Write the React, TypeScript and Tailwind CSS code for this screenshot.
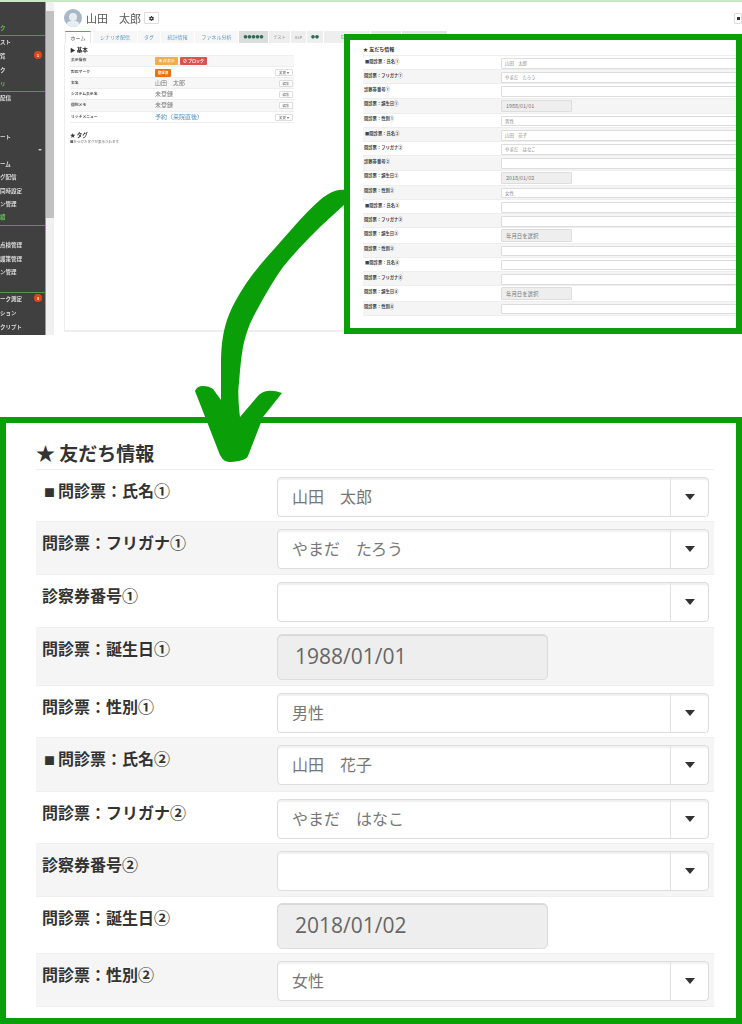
import { FaCog } from "react-icons/fa";

const G = "#0a9f09";

const bigRows = [
  { label: "問診票：氏名①", mark: true, value: "山田　太郎", cls: "h-[52px]", bg: "bg-white" },
  { label: "問診票：フリガナ①", value: "やまだ　たろう", cls: "h-[53px]", bg: "bg-[#f5f5f5]" },
  { label: "診察券番号①", value: "", cls: "h-[53px]", bg: "bg-white" },
  { label: "問診票：誕生日①", date: true, value: "1988/01/01", cls: "h-[58px]", bg: "bg-[#f5f5f5]" },
  { label: "問診票：性別①", value: "男性", cls: "h-[52px]", bg: "bg-white" },
  { label: "問診票：氏名②", mark: true, value: "山田　花子", cls: "h-[54px]", bg: "bg-[#f5f5f5]" },
  { label: "問診票：フリガナ②", value: "やまだ　はなこ", cls: "h-[52px]", bg: "bg-white" },
  { label: "診察券番号②", value: "", cls: "h-[53px]", bg: "bg-[#f5f5f5]" },
  { label: "問診票：誕生日②", date: true, value: "2018/01/02", cls: "h-[57px]", bg: "bg-white" },
  { label: "問診票：性別②", value: "女性", cls: "h-[53px]", bg: "bg-[#f5f5f5]" },
];

const smallRows = [
  ...bigRows.map((r) => ({ label: r.label, mark: r.mark, date: r.date, value: r.value })),
  { label: "問診票：氏名③", mark: true, value: "" },
  { label: "問診票：フリガナ③", value: "" },
  { label: "問診票：誕生日③", date: true, value: "年月日を選択" },
  { label: "問診票：性別③", value: "" },
  { label: "問診票：氏名④", mark: true, value: "" },
  { label: "問診票：フリガナ④", value: "" },
  { label: "問診票：誕生日④", date: true, value: "年月日を選択" },
  { label: "問診票：性別④", value: "" },
];

function BigRow({ r }: { r: (typeof bigRows)[number] }) {
  return (
    <div className={`flex items-start border-b border-[#efefef] ${r.cls} ${r.bg}`}>
      <div className={`w-[241px] shrink-0 pt-[8px] text-[16px] leading-[24px] font-bold text-[#333] ${r.mark ? "pl-[8px]" : "pl-[6px]"}`}>
        {r.mark && <span className="mr-[3px] text-[11px]">■</span>}
        {r.label}
      </div>
      {r.date ? (
        <div className="mt-[6px] flex h-[46px] w-[271px] items-center rounded-[5px] border border-[#dcdcdc] bg-[#eeeeee] pl-[17px] font-['Open_Sans'] text-[21px] text-[#666] shadow-[inset_0_1px_1px_rgba(0,0,0,0.1)]">
          {r.value}
        </div>
      ) : (
        <div className="mt-[7px] flex h-[40px] w-[432px] rounded-[4px] border border-[#dddddd] bg-white shadow-[inset_0_2px_1px_rgba(0,0,0,0.06)]">
          <div className="flex-1 pl-[14px] text-[16px] leading-[36px] text-[#777]">{r.value}</div>
          <div className="flex w-[38px] items-center justify-center border-l border-[#e2e2e2]">
            <div className="h-0 w-0 border-x-[5px] border-t-[6px] border-x-transparent border-t-[#333]" />
          </div>
        </div>
      )}
    </div>
  );
}

function SmallRow({ r, i }: { r: (typeof smallRows)[number]; i: number }) {
  return (
    <div className={`flex items-start border-t border-[#eeeeee] ${r.date ? "h-[15.3px]" : "h-[14.2px]"} ${i % 2 ? "bg-[#f5f5f5]" : "bg-white"}`}>
      <div className={`w-[138px] shrink-0 pt-[1.5px] text-[4.3px] leading-[7px] font-bold text-[#444] ${r.mark ? "pl-[2px]" : "pl-[1px]"}`}>
        {r.mark && <span>■</span>}
        {r.label}
      </div>
      {r.date ? (
        <div className="mt-[1px] flex h-[12.5px] w-[71px] items-center rounded-[1px] border border-[#dddddd] bg-[#eeeeee] pl-[4px] text-[5.4px] text-[#777]">
          {r.value}
        </div>
      ) : (
        <div className="mt-[2px] flex h-[10.5px] flex-1 items-center rounded-[1px] border border-[#dddddd] bg-white pl-[3px] text-[4.4px] text-[#888]">
          {r.value}
        </div>
      )}
    </div>
  );
}

const sideRows: { t: string; green?: boolean; line?: boolean; badge?: string; chev?: boolean; cls: string }[] = [
  { t: "ク", green: true, line: true, cls: "h-[14px]" },
  { t: "スト", cls: "h-[14px]" },
  { t: "覧", badge: "1", cls: "h-[14px]" },
  { t: "ク", cls: "h-[14px]" },
  { t: "リ", green: true, line: true, cls: "h-[14px]" },
  { t: "配信", cls: "h-[13.33px]" },
  { t: "", cls: "h-[13.33px]" },
  { t: "", cls: "h-[13.33px]" },
  { t: "ート", cls: "h-[13.33px]" },
  { t: "", chev: true, cls: "h-[13.33px]" },
  { t: "ーム", cls: "h-[13.33px]" },
  { t: "グ配信", cls: "h-[13.33px]" },
  { t: "同時設定", cls: "h-[13.33px]" },
  { t: "ン管理", cls: "h-[13.33px]" },
  { t: "績", green: true, line: true, cls: "h-[14.5px]" },
  { t: "", cls: "h-[13.5px]" },
  { t: "点検管理", cls: "h-[13.5px]" },
  { t: "護策管理", cls: "h-[13.5px]" },
  { t: "ン管理", line: true, cls: "h-[27px]" },
  { t: "ーク測定", badge: "3", cls: "h-[14px]" },
  { t: "ション", cls: "h-[13.5px]" },
  { t: "クリプト", cls: "h-[13.5px]" },
];

function Sidebar() {
  return (
    <div className="mt-[2px] h-[333px] w-[46px] shrink-0 overflow-hidden border-r border-[#999] bg-[#404040] pt-[19.5px] blur-[0.3px]">
      {sideRows.map((s, i) => (
        <div key={i} className={`relative flex items-start pt-[2px] text-[5.5px] leading-[9px] font-bold ${s.cls} ${s.green ? "text-[#5fbf4f]" : "text-[#ddd]"} ${s.line ? "border-b border-[#4f9a45]" : ""}`}>
          {s.t}
          {s.badge && (
            <span className="absolute top-[1px] right-[3px] flex h-[8px] w-[8px] items-center justify-center rounded-full bg-[#e0451c] text-[4px] leading-none text-white">
              {s.badge}
            </span>
          )}
          {s.chev && <span className="absolute top-[4px] right-[3px] h-0 w-0 border-x-[2px] border-t-[2px] border-x-transparent border-t-[#ccc]" />}
        </div>
      ))}
    </div>
  );
}

const tabs = [
  { t: "シナリオ配信", cls: "w-[44px]" },
  { t: "タグ", cls: "w-[22px]" },
  { t: "統計情報", cls: "w-[33px]" },
  { t: "ファネル分析", cls: "w-[43px]" },
];
const grayTabs = [
  { t: "●●●●●", cls: "w-[29px] bg-[#dddddd] text-[#2f6b55]" },
  { t: "テスト", cls: "w-[21px] bg-[#eeeeee] text-[#888]" },
  { t: "ASP", cls: "w-[15px] bg-[#eeeeee] text-[#888]" },
  { t: "●●", cls: "w-[16px] bg-[#eeeeee] text-[#2f6b55]" },
  { t: "【完了】", cls: "w-[46px] bg-[#eeeeee] text-[#888]" },
  { t: "", cls: "w-[30px] bg-[#e4e4e4] text-[#888]" },
  { t: "", cls: "w-[45px] bg-[#e4e4e4] text-[#888]" },
];

function Small({ children, className = "" }: { children?: React.ReactNode; className?: string }) {
  return (
    <span className={`flex items-center justify-center rounded-[1px] border border-[#ddd] bg-white text-[3.5px] text-[#666] ${className}`}>
      {children}
    </span>
  );
}

const infoRows = [
  { l: "対応マーク", h: "h-[11px]", bg: "bg-white", v: <span className="mt-[2px] flex h-[8px] w-[16px] items-center justify-center rounded-[1px] bg-[#f07010] text-[3.5px] font-bold text-white">登録済</span>, btn: <Small className="h-[7px] w-[18px]">変更 ▾</Small> },
  { l: "本名", h: "h-[11px]", bg: "bg-[#f7f7f7]", v: <span className="text-[6px] leading-[9px] text-[#777]">山田　太郎</span>, btn: <Small className="h-[7px] w-[14px]">編集</Small> },
  { l: "システム表示名", h: "h-[11px]", bg: "bg-white", v: <span className="text-[6px] leading-[9px] text-[#777]">未登録</span>, btn: <Small className="h-[7px] w-[14px]">編集</Small> },
  { l: "個別メモ", h: "h-[12px]", bg: "bg-[#f7f7f7]", v: <span className="text-[6px] leading-[9px] text-[#777]">未登録</span>, btn: <Small className="h-[7px] w-[14px]">編集</Small> },
  { l: "リッチメニュー", h: "h-[11px]", bg: "bg-white", v: <span className="text-[6px] leading-[9px] text-[#4a8fc7]">予約（来院直後）</span>, btn: <Small className="h-[7px] w-[18px]">変更 ▾</Small> },
];

function Main() {
  return (
    <div className="min-w-0 flex-1 pl-[10px] blur-[0.3px]">
      <div className="flex h-[31px] items-center pt-[5px]">
        <div className="relative h-[18px] w-[18px] shrink-0 overflow-hidden rounded-full bg-[#a9b8c6]">
          <div className="absolute top-[4px] left-[5px] h-[8px] w-[8px] rounded-full bg-[#e8edf1]" />
          <div className="absolute top-[12px] left-[2px] h-[10px] w-[14px] rounded-full bg-[#e8edf1]" />
        </div>
        <span className="ml-[4px] text-[11px] leading-none text-[#555]">山田　太郎</span>
        <span className="ml-[3px] flex h-[12px] w-[15px] items-center justify-center rounded-[1px] border border-[#ddd]">
          <FaCog className="h-[5px] w-[5px] text-[#333]" />
        </span>
        <div className="flex-1" />
        <span className="flex h-[11px] w-[8px] items-center rounded-[1px] border border-[#ddd] pl-[2px]">
          <span className="h-[3px] w-[3px] bg-[#333]" />
        </span>
      </div>
      <div className="flex h-[12px] items-stretch whitespace-nowrap text-[5px] leading-[12px]">
        <div className="mr-[2px] ml-[1px] w-[26px] border-t border-x border-t-[#4caf50] border-x-[#e4e4e4] bg-white text-center text-[#555]">ホーム</div>
        {tabs.map((t) => (
          <div key={t.t} className={`mr-[1px] shrink-0 bg-[#f7f7f7] text-center text-[#5b9bc9] ${t.cls}`}>
            {t.t}
          </div>
        ))}
        {grayTabs.map((t, i) => (
          <div key={i} className={`mr-[1px] shrink-0 text-center text-[4px] ${t.cls}`}>
            {t.t}
          </div>
        ))}
      </div>
      <div className="mt-[0px] h-[289px] border border-t-0 border-b-2 border-[#eeeeee] pt-[3px] pl-[5px]">
        <div className="text-[5.5px] leading-[9px] font-bold text-[#333]">▶ 基本</div>
        <div className="w-[224px]">
          <div className="flex h-[12px] items-start border-y border-[#eee] bg-[#f7f7f7]">
            <div className="w-[85px] pl-[1px] text-[3.8px] leading-[7px] font-bold text-[#555]">表示操作</div>
            <span className="mt-[1px] flex h-[8px] w-[23px] items-center justify-center rounded-[1px] bg-[#f0ad4e] text-[3.8px] text-white">◉ 非表示</span>
            <span className="mt-[1px] ml-[2px] flex h-[8px] w-[27px] items-center justify-center rounded-[1px] bg-[#d9534f] text-[4px] font-bold text-white">⊘ ブロック</span>
          </div>
          {infoRows.map((r) => (
            <div key={r.l} className={`flex items-start justify-between border-b border-[#eee] pr-[1px] ${r.h} ${r.bg}`}>
              <div className="flex items-start">
                <div className="w-[85px] pt-[1px] pl-[1px] text-[3.8px] leading-[7px] font-bold text-[#555]">{r.l}</div>
                {r.v}
              </div>
              <div className="pt-[2px]">{r.btn}</div>
            </div>
          ))}
        </div>
        <div className="mt-[8px] text-[5.5px] leading-[8px] font-bold text-[#333]">★ タグ</div>
        <div className="text-[3.5px] leading-[6px] text-[#666]">■をつけたタグが表示されます</div>
      </div>
    </div>
  );
}

export default function App() {
  return (
    <div className="relative flex h-[1024px] w-[742px] flex-col overflow-hidden bg-white font-['Noto_Sans_CJK_JP','Noto_Sans',sans-serif]">
      <div className="h-[2px] shrink-0 bg-[#c8e8c8]" />
      <div className="flex h-[335px] shrink-0 -mt-[2px] overflow-hidden">
        <Sidebar />
        <div className="mt-[2px] w-[8px] shrink-0 bg-[#f1f1f1]">
          <div className="mt-[9px] h-[207px] bg-[#c1c1c1]" />
        </div>
        <Main />
      </div>

      {/* enlarged frame over the screenshot */}
      <div className="absolute top-[34px] left-[344px] h-[300px] w-[398px] overflow-hidden border-[6px] border-[#0a9f09] bg-white pt-[3px] pl-[13px]">
        <div className="flex h-[12px] items-center text-[5px] font-bold text-[#333]">★ 友だち情報</div>
        <div className="w-[400px] border-b border-[#eee]">
          {smallRows.map((r, i) => (
            <SmallRow key={i} r={r} i={i} />
          ))}
        </div>
      </div>

      {/* big panel */}
      <div className="mt-[82px] flex-1 border-[6px] border-[#0a9f09] bg-white pr-[22px] pl-[30px]">
        <div className="flex h-[47px] items-end border-b border-[#eeeeee] pb-[2px] text-[19px] leading-[28px] font-bold text-[#333]">
          ★ 友だち情報
        </div>
        {bigRows.map((r, i) => (
          <BigRow key={i} r={r} />
        ))}
      </div>

      {/* curved arrow */}
      <svg className="pointer-events-none absolute top-0 left-0" width="742" height="1024" viewBox="0 0 742 1024">
        <path
          fill={G}
          d="M345 190 C335 189 328 194 320 200 C305 213 285 237 267 257 C250 276 235 298 227 320 C222 335 221 350 221 365 L221 400 L213 389 Q209 386 203 386 Q197 386 195 391 L218 450 Q222 463 230 462 Q246 461 248 456 L263 417 L282 393 Q274 390 267 391 Q261 392 257 397 L240 417 C238 400 238 390 239 383 C240 370 241 358 243 347 C246 333 250 322 257 310 C265 295 275 278 283 267 C295 252 310 237 320 227 L345 204 Z"
        />
      </svg>
    </div>
  );
}
